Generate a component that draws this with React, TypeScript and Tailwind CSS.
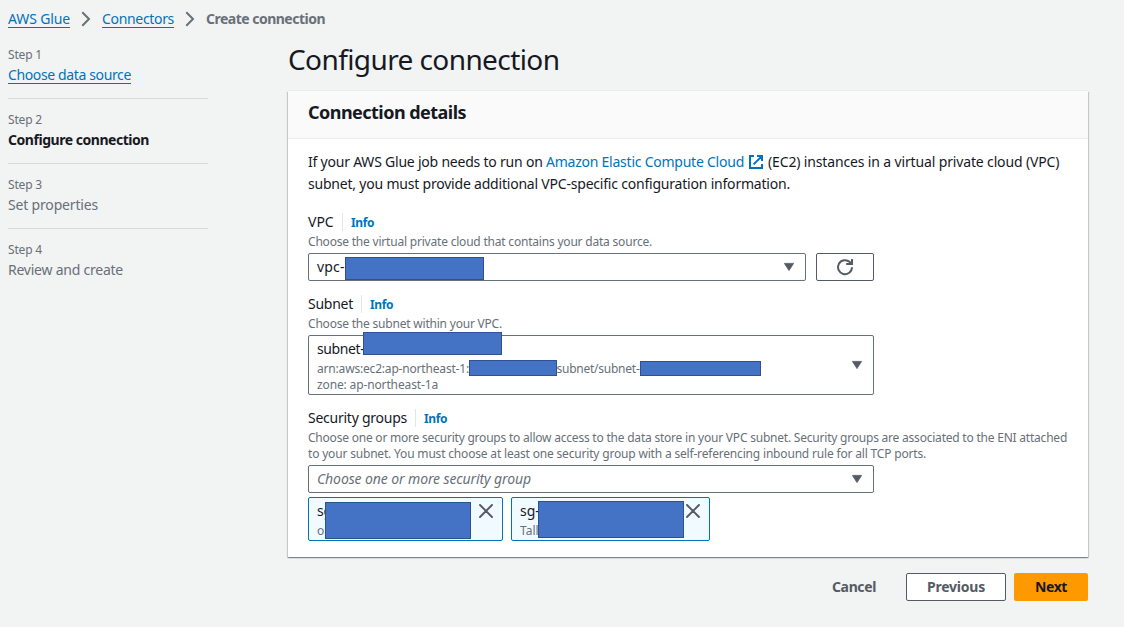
import React from 'react';

function Mask({ className }: { className: string }) {
  return <span className={`absolute border border-[#2f528f] bg-[#4472c4] ${className}`} />;
}

function Chevron() {
  return (
    <svg width="16" height="16" viewBox="0 0 16 16" fill="none" stroke="#687078" strokeWidth="2" className="mt-[3px] shrink-0">
      <path d="M4.3 1.2 11 8l-6.7 6.8" />
    </svg>
  );
}

function Caret({ className }: { className: string }) {
  return (
    <svg width="12" height="10" viewBox="0 0 12 10" className={`absolute ${className}`}>
      <path d="M1.4 1.4h9.2L6 8.6Z" fill="#545b64" stroke="#545b64" strokeWidth="0.8" strokeLinejoin="round" />
    </svg>
  );
}

function Close({ className }: { className: string }) {
  return (
    <svg width="14" height="14" viewBox="0 0 14 14" fill="none" stroke="#545b64" strokeWidth="1.9" strokeLinecap="round" className={`absolute ${className}`}>
      <path d="M1 1l12 12M13 1 1 13" />
    </svg>
  );
}

function Label({ text, className }: { text: string; className: string }) {
  return (
    <div className="flex h-[22px] leading-[22px]">
      <span className={`shrink-0 whitespace-nowrap ${className}`}>{text}</span>
      <span className="mt-[2px] h-[18px] w-px shrink-0 bg-[#e3e6e6]" />
      <a className="mt-px ml-2 text-[12px] font-bold tracking-[-0.4px] text-[#0073bb]">Info</a>
    </div>
  );
}

const steps = [
  { title: 'Choose data source', style: 'h-5 w-[123px] border-b border-[#0073bb] tracking-[-0.369px] text-[#0073bb]' },
  { title: 'Configure connection', style: 'font-bold tracking-[-0.461px]' },
  { title: 'Set properties', style: 'tracking-[-0.172px] text-[#687078]' },
  { title: 'Review and create', style: 'tracking-[-0.234px] text-[#687078]' },
];

export default function App() {
  return (
    <div className="h-[627px] w-[1124px] overflow-hidden bg-[#f2f3f3] font-['Noto_Sans','Open_Sans',sans-serif] text-[14px] text-[#16191f]">
      <nav className="flex h-[41px] pt-2 pl-2 leading-[22px] whitespace-nowrap">
        <a className="h-5 w-[62px] border-b border-[#0073bb] tracking-[-0.135px] text-[#0073bb]">AWS Glue</a>
        <div className="w-8 pl-2"><Chevron /></div>
        <a className="h-5 w-[72px] border-b border-[#0073bb] tracking-[-0.325px] text-[#0073bb]">Connectors</a>
        <div className="w-8 pl-2"><Chevron /></div>
        <span className="font-bold tracking-[-0.509px] text-[#687078]">Create connection</span>
      </nav>

      <div className="flex">
        <ol className="mt-[6px] ml-2 flex w-[200px] shrink-0 flex-col gap-[13px]">
          {steps.map((step, i) => (
            <li key={step.title} className="h-[52px] border-b border-[#d5dbdb] last:border-0">
              <div className="h-4 text-[12px] leading-4 tracking-[-0.175px] text-[#687078]">Step {i + 1}</div>
              <div className={`mt-px whitespace-nowrap leading-[22px] ${step.style}`}>{step.title}</div>
            </li>
          ))}
        </ol>

        <main className="ml-20 w-[800px] shrink-0">
          <h1 className="h-[50px] whitespace-nowrap text-[28px] leading-9 tracking-[-0.59px]">Configure connection</h1>

          <section className="h-[466px] bg-white shadow-[0_1px_1px_0_rgba(0,28,36,0.3),1px_1px_1px_0_rgba(0,28,36,0.15),-1px_1px_1px_0_rgba(0,28,36,0.15),0_-1px_0_0_#eaeded]">
            <header className="h-12 border-b border-[#eaeded] bg-[#fafafa] pt-[10px] pl-5">
              <h2 className="whitespace-nowrap text-[18px] font-bold leading-[22px] tracking-[-0.531px]">Connection details</h2>
            </header>

            <div className="pt-3 pl-5">
              <div className="h-[60px] whitespace-nowrap leading-[22px]">
                <p className="flex">
                  <span className="w-[238px] shrink-0 whitespace-pre tracking-[-0.216px]">If your AWS Glue job needs to run on </span>
                  <a className="w-[203px] shrink-0 tracking-[-0.238px] text-[#0073bb]">Amazon Elastic Compute Cloud</a>
                  <svg width="14" height="14" viewBox="0 0 14 14" fill="none" stroke="#0073bb" strokeWidth="2" className="mt-1 shrink-0">
                    <path d="M5 1H1v12h12V9M8 1h5v5M12.6 1.4 4.6 9.4" />
                  </svg>
                  <span className="ml-[5px] tracking-[-0.145px]">(EC2) instances in a virtual private cloud (VPC)</span>
                </p>
                <p className="tracking-[-0.206px]">subnet, you must provide additional VPC-specific configuration information.</p>
              </div>

              <div className="h-[82px]">
                <Label text="VPC" className="w-[34px]" />
                <p className="h-5 whitespace-nowrap pt-px text-[12px] leading-4 tracking-[-0.203px] text-[#687078]">Choose the virtual private cloud that contains your data source.</p>
                <div className="flex gap-[10px]">
                  <div className="relative h-7 w-[498px] rounded-[2px] border border-[#687078] bg-white pl-2 leading-[26px] tracking-[0.2px]">
                    vpc-
                    <Mask className="top-[3px] left-9 h-[23px] w-[139px]" />
                    <Caret className="top-[8px] left-[474px]" />
                  </div>
                  <button className="flex h-7 w-[58px] items-center justify-center rounded-[2px] border border-[#545b64] bg-white">
                    <svg width="18" height="18" viewBox="0 0 18 18" fill="none" stroke="#545b64" strokeWidth="2">
                      <path d="M16 9.3A7 7 0 1 1 13.8 4.1L15.5 5.6M16 1v5h-5.8" />
                    </svg>
                  </button>
                </div>
              </div>

              <div className="h-[114px]">
                <Label text="Subnet" className="w-[53px] tracking-[-0.258px]" />
                <p className="h-5 whitespace-nowrap pt-px text-[12px] leading-4 tracking-[-0.206px] text-[#687078]">Choose the subnet within your VPC.</p>
                <div className="relative h-[60px] w-[566px] rounded-[2px] border border-[#687078] bg-white pt-px pl-2">
                  <div className="h-6 leading-[24px] tracking-[-0.4px]">subnet-</div>
                  <div className="flex h-4 text-[12px] leading-4 whitespace-nowrap text-[#687078]">
                    <span className="w-[239.5px] tracking-[-0.183px]">arn:aws:ec2:ap-northeast-1:</span>
                    <span className="tracking-[-0.246px]">subnet/subnet-</span>
                  </div>
                  <div className="text-[12px] leading-4 tracking-[-0.134px] text-[#687078]">zone: ap-northeast-1a</div>
                  <Mask className="top-[-4px] left-[54px] h-[23px] w-[139px]" />
                  <Mask className="top-6 left-40 h-4 w-[88px]" />
                  <Mask className="top-[25px] left-[331px] h-[15px] w-[121px]" />
                  <Caret className="top-6 left-[542px]" />
                </div>
              </div>

              <div>
                <Label text="Security groups" className="w-[107px] tracking-[-0.249px]" />
                <div className="h-9 whitespace-nowrap pt-px text-[12px] leading-4 text-[#687078]">
                  <p className="tracking-[-0.215px]">Choose one or more security groups to allow access to the data store in your VPC subnet. Security groups are associated to the ENI attached</p>
                  <p className="tracking-[-0.181px]">to your subnet. You must choose at least one security group with a self-referencing inbound rule for all TCP ports.</p>
                </div>
                <div className="relative h-7 w-[566px] rounded-[2px] border border-[#687078] bg-white pl-2 leading-[26px] tracking-[-0.106px] text-[#687078] italic">
                  Choose one or more security group
                  <Caret className="top-[8px] left-[542px]" />
                </div>
                <div className="mt-1 flex gap-2">
                  <div className="relative h-11 w-[195px] rounded-[2px] border border-[#0073bb] bg-[#f1faff] pt-[2px] pl-2">
                    <div className="h-[23px] leading-[22px] tracking-[-0.3px]">sg-</div>
                    <div className="text-[12px] leading-4 text-[#687078]">op</div>
                    <Mask className="top-1 left-4 h-[37px] w-[146px]" />
                    <Close className="top-[6px] left-[170px]" />
                  </div>
                  <div className="relative h-11 w-[199px] rounded-[2px] border border-[#0073bb] bg-[#f1faff] pt-[2px] pl-2">
                    <div className="h-[23px] leading-[22px]">sg-</div>
                    <div className="text-[12px] leading-4 text-[#687078]">Tall</div>
                    <Mask className="top-[3px] left-[26px] h-[37px] w-[146px]" />
                    <Close className="top-[6px] left-[174px]" />
                  </div>
                </div>
              </div>
            </div>
          </section>

          <footer className="mt-4 flex justify-end font-bold leading-[26px]">
            <button className="mr-[29px] h-7 w-[45px] text-left tracking-[-0.371px] text-[#545b64]">Cancel</button>
            <button className="mr-2 h-7 w-[100px] rounded-[2px] border border-[#545b64] bg-white tracking-[-0.226px] text-[#545b64]">Previous</button>
            <button className="h-7 w-[74px] rounded-[2px] bg-[#ff9900] tracking-[-0.407px] text-[#16191f]">Next</button>
          </footer>
        </main>
      </div>
    </div>
  );
}
